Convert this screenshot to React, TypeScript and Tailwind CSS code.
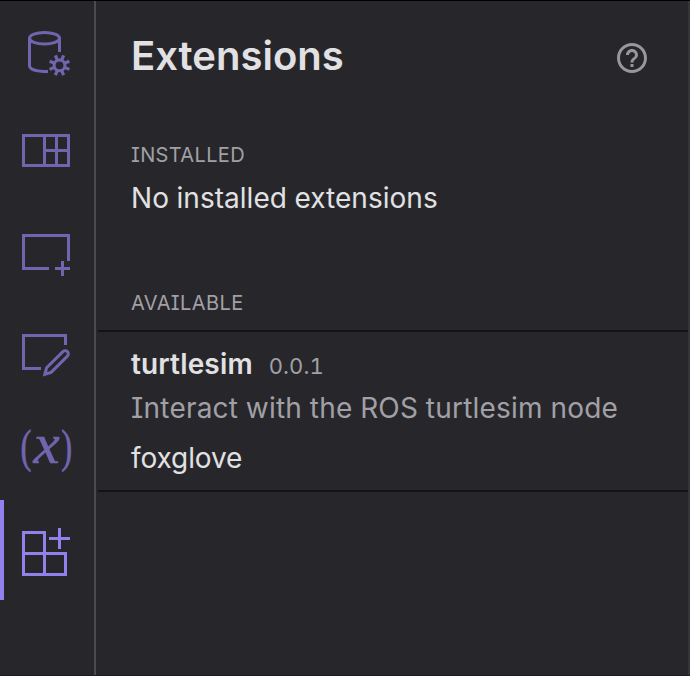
import type { ReactNode } from "react";

function DataSourceIcon() {
  return (
    <>
      <ellipse cx="44.5" cy="38.3" rx="15" ry="5.8" />
      <path d="M29.5 38.3V65.5C29.5 69.3 36 71.6 48 71.6M59.5 38.3V52" />
      <circle cx="59.5" cy="65.3" r="5.4" strokeWidth="3" />
      {[22.5, 67.5, 112.5, 157.5, 202.5, 247.5, 292.5, 337.5].map((angle) => (
        <path key={angle} d="M59.5 59.4V54.6" strokeWidth="3.2" transform={`rotate(${angle} 59.5 65.3)`} />
      ))}
    </>
  );
}

function LayoutIcon() {
  return <path d="M23.5 35.5H68.5V65.5H23.5ZM44.5 35.5V65.5M56.5 35.5V65.5M44.5 50.5H68.5" />;
}

function AddPanelIcon() {
  return <path d="M68.5 61V35.5H23.5V68.5H49M55 68.5H70M62.5 61V76" />;
}

function EditPanelIcon() {
  return (
    <>
      <path d="M65.5 45V35.5H23.5V68.5H41" />
      <path d="M44.9 74.2L46.6 67.8L62.9 51.6A3.1 3.1 0 0 1 67.4 56.1L51.1 72.4Z" strokeWidth="3" />
    </>
  );
}

function VariablesIcon() {
  return (
    <g fill="currentColor" strokeWidth="0.6" className="font-['Liberation_Serif',serif]">
      <text transform="translate(20.5 61.7) scale(0.72 1)" fontSize="45.7">(</text>
      <text transform="translate(33.4 63.4) scale(1 0.97)" fontSize="59" fontStyle="italic">x</text>
      <text transform="translate(61.2 61.7) scale(0.72 1)" fontSize="45.7">)</text>
    </g>
  );
}

function ExtensionsIcon() {
  return <path d="M23.5 32.5H44.5V74.5H23.5ZM23.5 53.5H65.5V74.5H44.5M49 38.5H70M59.5 28V49" />;
}

function Tab({ children, selected = false }: { children: ReactNode; selected?: boolean }) {
  return (
    <button
      className={`block h-[100px] w-full shrink-0 border-l-4 ${
        selected ? "border-[#9480ed] text-[#9480ed]" : "border-transparent text-[#7265b0]"
      }`}
    >
      <svg width="90" height="100" viewBox="4 0 90 100" fill="none" stroke="currentColor" strokeWidth="3">
        {children}
      </svg>
    </button>
  );
}

export default function App() {
  return (
    <div className="flex h-[676px] w-[690px] overflow-hidden border-t border-b border-t-black border-b-[#211a25] bg-[#27272b] font-['Inter',sans-serif] text-[#e1e1e4] [font-feature-settings:'cv08','cv10','tnum']">
      <nav className="-mt-px flex w-24 shrink-0 flex-col border-r-2 border-[#4b4a51]">
        <Tab><DataSourceIcon /></Tab>
        <Tab><LayoutIcon /></Tab>
        <Tab><AddPanelIcon /></Tab>
        <Tab><EditPanelIcon /></Tab>
        <Tab><VariablesIcon /></Tab>
        <Tab selected><ExtensionsIcon /></Tab>
      </nav>
      <main className="ml-0.5 flex-1 border-r-2 border-[#34343a]">
        <header className="flex items-center justify-between pt-[31px] pr-[38px] pl-[33px]">
          <h1 className="text-[40px] leading-[48px] font-semibold">Extensions</h1>
          <svg width="36" height="36" viewBox="0 0 24 24" fill="#98989b" className="mt-1">
            <path d="M11 18h2v-2h-2v2zm1-16C6.48 2 2 6.48 2 12s4.48 10 10 10 10-4.48 10-10S17.52 2 12 2zm0 18c-4.41 0-8-3.59-8-8s3.59-8 8-8 8 3.59 8 8-3.59 8-8 8zm0-14c-2.21 0-4 1.79-4 4h2c0-1.1.9-2 2-2s2 .9 2 2c0 2-3 1.75-3 5h2c0-2.25 3-2.5 3-5 0-2.21-1.79-4-4-4z" />
          </svg>
        </header>
        <section className="pt-[59px] pl-[33px]">
          <h2 className="text-[20px] leading-8 tracking-[0.35px] text-[#a1a0a7]">INSTALLED</h2>
          <p className="mt-[7px] text-[28px] leading-10 tracking-[0.03px]">No installed extensions</p>
        </section>
        <section className="pt-[69px]">
          <h2 className="pl-[33px] text-[20px] leading-8 tracking-[0.4px] text-[#a1a0a7]">AVAILABLE</h2>
          <article className="mt-[11px] h-[162px] border-y-2 border-[#121217] pt-3 pl-[33px]">
            <div className="flex items-baseline gap-4 leading-10">
              <h3 className="text-[28px] tracking-[0.15px] font-semibold">turtlesim</h3>
              <span className="text-[22px] tracking-[0.1px] text-[#a1a0a7]">0.0.1</span>
            </div>
            <p className="mt-0.5 text-[28px] leading-10 tracking-[0.2px] text-[#a1a0a7]">Interact with the ROS turtlesim node</p>
            <p className="mt-2.5 text-[28px] leading-10 tracking-[-0.1px]">foxglove</p>
          </article>
        </section>
      </main>
    </div>
  );
}
